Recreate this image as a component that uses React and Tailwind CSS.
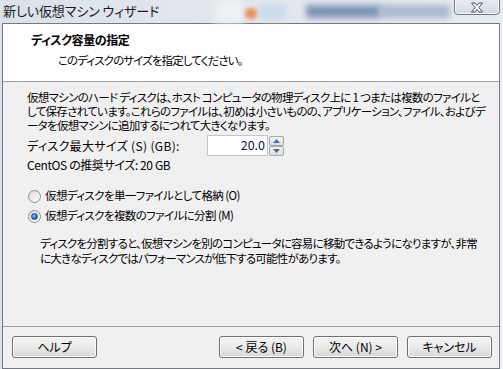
import React from 'react'

function Radio({ checked }) {
  return (
    <span className="relative flex h-[13px] w-[13px] items-center justify-center rounded-full border border-[#8f8f8f] bg-gradient-to-br from-[#dcdcdc] to-[#fbfbfb]">
      {checked ? (
        <span className="h-[7px] w-[7px] rounded-full border border-[#1c4e8c] bg-[radial-gradient(circle_at_40%_35%,#7fc4f5,#1a6ad0_60%,#0d3f8a)]" />
      ) : (
        <span className="h-[7px] w-[7px] rounded-full bg-gradient-to-br from-[#e4e4e4] to-[#f6f6f6]" />
      )}
    </span>
  )
}

function Btn({ children, className = '' }) {
  return (
    <button className={'flex h-[22px] w-[85px] items-center justify-center rounded-[3px] border border-[#707070] bg-gradient-to-b from-[#f2f2f2] via-[#ebebeb] to-[#d6d6d6] text-[12px] text-black shadow-[inset_0_0_0_1px_#fcfcfc] ' + className}>
      {children}
    </button>
  )
}

function SpinBtn({ up }) {
  return (
    <span className="flex h-[10px] w-[15px] items-center justify-center rounded-[2px] border border-[#a7a7a7] bg-gradient-to-b from-[#f4f4f4] to-[#dcdcdc]">
      <svg width="7" height="4" viewBox="0 0 7 4">
        {up ? <path d="M0 4 L3.5 0 L7 4 Z" fill="#4f6c9c" /> : <path d="M0 0 L3.5 4 L7 0 Z" fill="#4f6c9c" />}
      </svg>
    </span>
  )
}

export default function App() {
  return (
    <div className="relative h-[369px] w-[503px] overflow-hidden bg-gradient-to-r from-[#dbe2ea] via-[#e2e7ed] to-[#e9ecef] font-['Noto_Sans_CJK_JP',sans-serif] text-[12px] text-black [font-feature-settings:'palt']">
      {/* blurred backdrop behind the glass */}
      <div className="absolute left-[214px] top-0 h-[23px] w-[30px] bg-[#eef1f4] blur-[4px]" />
      <div className="absolute left-[258px] top-[4px] h-[16px] w-[30px] rounded-full bg-[#c9dced] blur-[3px]" />
      <div className="absolute left-[245px] top-[8px] h-[11px] w-[12px] rounded-full bg-[#e98d5e] blur-[2px]" />
      <div className="absolute left-[306px] top-[5px] h-[13px] w-[75px] bg-[#7f95b6] blur-[3px]" />
      <div className="absolute left-[380px] top-[5px] h-[13px] w-[70px] bg-[#a8b8cd] blur-[3px]" />
      <div className="absolute right-0 top-[23px] h-[346px] w-[3px] bg-[#eef0f2]" />

      {/* close button */}
      <div className="absolute left-[454px] top-[-2px] flex h-[17px] w-[46px] items-center justify-center rounded-b-[4px] border border-[#6f7a87] bg-gradient-to-b from-[#e9edf2] to-[#d2dae3] shadow-[inset_0_0_0_1px_#f6f8fa]">
        <svg width="14" height="11" viewBox="0 0 14 11" className="mt-[2px]">
          <path d="M1.5 1 L5 1 L7 3.5 L9 1 L12.5 1 L8.8 5.5 L12.5 10 L9 10 L7 7.5 L5 10 L1.5 10 L5.2 5.5 Z" fill="#ffffff" stroke="#4a5360" strokeWidth="1" strokeLinejoin="round" />
        </svg>
      </div>

      {/* title bar */}
      <div className="flex h-[23px] items-start pl-[3px] pt-[2px]">
        <span className="text-[13px] leading-[17px] tracking-[-0.1px] text-[#1a1a1a]">新しい仮想マシン ウィザード</span>
      </div>

      {/* client area */}
      <div className="ml-[2px] flex h-[346px] w-[498px] flex-col border border-[#707a84] bg-[#f0f0f0]">
        <div className="h-[58px] border-b border-[#a0a0a0] bg-white pt-[8px]">
          <div className="pl-[28px] text-[12px] font-bold leading-[16px] tracking-[-0.4px]">ディスク容量の指定</div>
          <div className="mt-[4px] pl-[55px] text-[11.5px] leading-[16px] tracking-[-0.9px]">このディスクのサイズを指定してください。</div>
        </div>

        <div className="flex flex-1 flex-col">
          <div className="pl-[24px] pt-[8px] text-[11.5px] leading-[14px] tracking-[-0.7px] whitespace-nowrap">
            <div>仮想マシンのハード ディスクは、ホスト コンピュータの物理ディスク上に 1 つまたは複数のファイルと</div>
            <div>して保存されています。これらのファイルは、初めは小さいものの、アプリケーション、ファイル、およびデ</div>
            <div>ータを仮想マシンに追加するにつれて大きくなります。</div>
          </div>

          <div className="mt-[3px] flex items-center pl-[24px]">
            <span className="w-[180px] leading-[14px] tracking-[0.35px]">ディスク最大サイズ (S) (GB):</span>
            <span className="flex h-[21px] w-[61px] items-center justify-end border border-[#c3c7cc] bg-white pr-[2px] text-[12.5px] text-[#10104a]">20.0</span>
            <span className="ml-[1px] flex flex-col gap-0">
              <SpinBtn up />
              <SpinBtn />
            </span>
          </div>

          <div className="mt-[2px] pl-[24px] leading-[14px] tracking-[-0.4px]">CentOS の推奨サイズ: 20 GB</div>

          <div className="mt-[14px] flex h-[20px] items-center gap-[4px] pl-[25px] text-[11.5px] tracking-[-0.6px]">
            <Radio />
            <span>仮想ディスクを単一ファイルとして格納 (O)</span>
          </div>
          <div className="flex h-[20px] items-center gap-[4px] pl-[25px] text-[11.5px] tracking-[-0.6px]">
            <Radio checked />
            <span>仮想ディスクを複数のファイルに分割 (M)</span>
          </div>

          <div className="mt-[10px] pl-[37px] text-[11.5px] leading-[14.5px] tracking-[-0.75px] whitespace-nowrap">
            <div>ディスクを分割すると、仮想マシンを別のコンピュータに容易に移動できるようになりますが、非常</div>
            <div>に大きなディスクではパフォーマンスが低下する可能性があります。</div>
          </div>

          <div className="mt-auto flex items-center border-t border-[#a0a0a0] pb-[10px] pl-[9px] pr-[7px] pt-[9px]">
            <Btn>ヘルプ</Btn>
            <div className="flex-1" />
            <div className="flex gap-[9px]">
              <Btn>&lt; 戻る (B)</Btn>
              <Btn>次へ (N) &gt;</Btn>
              <Btn>キャンセル</Btn>
            </div>
          </div>
        </div>
      </div>
    </div>
  )
}
